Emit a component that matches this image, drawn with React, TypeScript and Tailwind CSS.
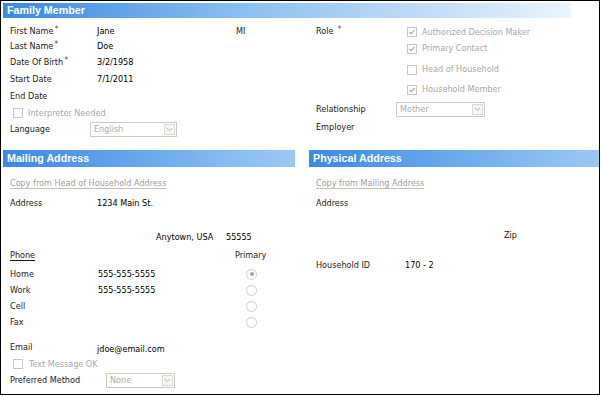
import React from "react";

function Check({ checked }: { checked?: boolean }) {
  return (
    <span className="w-[10px] h-[10px] shrink-0 border border-[#c6c6c6] bg-white flex items-center justify-center">
      {checked && (
        <svg width="8" height="8" viewBox="0 0 8 8">
          <path d="M1.5 4 L3.2 5.7 L6.5 2.2" stroke="#a6a6a6" strokeWidth="1.1" fill="none" />
        </svg>
      )}
    </span>
  );
}

function Radio({ sel }: { sel?: boolean }) {
  return (
    <span className="w-[11px] h-[11px] shrink-0 rounded-full border border-[#d0d0d0] bg-white flex items-center justify-center">
      {sel && <span className="w-[4px] h-[4px] rounded-full bg-[#a5a5a5]" />}
    </span>
  );
}

function Sel({ cls, text }: { cls: string; text: string }) {
  return (
    <div className={`${cls} h-[15px] border border-[#cbcbc3] flex items-stretch bg-white`}>
      <span className="flex-1 pl-[3px] text-[#ababab] leading-[13px]">{text}</span>
      <span className="w-[11px] m-[1px] border border-[#dcdcd4] bg-[#f5f5f2] flex items-center justify-center">
        <svg width="7" height="5" viewBox="0 0 7 5">
          <path d="M1 1 L3.5 3.5 L6 1" stroke="#b3b3b3" strokeWidth="1" fill="none" />
        </svg>
      </span>
    </div>
  );
}

function Star() {
  return <span className="text-[#8e3b3b] ml-[1px] relative -top-[2px]">*</span>;
}

export default function App() {
  return (
    <div className="w-[601px] h-[396px] bg-white">
      <div className="w-[600px] h-[395px] border border-black pt-[2px] pl-[1px] text-[9px] text-[#1a1a1a] font-['DejaVu_Sans_Condensed','Liberation_Sans',sans-serif] leading-none">
        {/* Family Member header */}
        <div className="mx-[1px] h-[15px] bg-[linear-gradient(to_right,#3a89e3_0px,#8ec1f2_250px,#e9f4fd_566px,#fff_570px)] text-white font-bold text-[10.7px] pl-[4px] leading-[15px] font-['Liberation_Sans',sans-serif]">
          Family Member
        </div>

        <div className="flex pl-[1px] gap-[14px] mt-[5px]">
          {/* left */}
          <div className="w-[292px] pl-[7px] flex flex-col">
            <div className="h-[16px] flex items-center">
              <span className="w-[87px]">First Name<Star /></span>
              <span className="w-[139px] text-black">Jane</span>
              <span>MI</span>
            </div>
            <div className="h-[15px] flex items-center">
              <span className="w-[87px]">Last Name<Star /></span>
              <span className="text-black">Doe</span>
            </div>
            <div className="h-[16px] flex items-center">
              <span className="w-[87px]">Date Of Birth<Star /></span>
              <span className="text-black">3/2/1958</span>
            </div>
            <div className="h-[18px] flex items-center">
              <span className="w-[87px]">Start Date</span>
              <span className="text-black">7/1/2011</span>
            </div>
            <div className="h-[16px] flex items-center">
              <span>End Date</span>
            </div>
            <div className="h-[18px] flex items-center pl-[3px]">
              <Check />
              <span className="ml-[5px] text-[#a8a8a8]">Interpreter Needed</span>
            </div>
            <div className="h-[15px] flex items-center">
              <span className="w-[80px]">Language</span>
              <Sel cls="w-[87px]" text="English" />
            </div>
          </div>

          {/* right */}
          <div className="w-[290px] pl-[7px] flex flex-col">
            <div className="flex">
              <div className="w-[91px] h-[16px] flex items-center">
                Role <span className="text-[#8e3b3b] ml-[4px] relative -top-[2px]">*</span>
              </div>
              <div className="flex flex-col mt-[1px] text-[#a8a8a8]">
                <div className="h-[16px] flex items-center">
                  <Check checked />
                  <span className="ml-[5px]">Authorized Decision Maker</span>
                </div>
                <div className="h-[17px] flex items-center">
                  <Check checked />
                  <span className="ml-[5px]">Primary Contact</span>
                </div>
                <div className="h-[25px] flex items-center">
                  <Check />
                  <span className="ml-[5px]">Head of Household</span>
                </div>
                <div className="h-[15px] flex items-center">
                  <Check checked />
                  <span className="ml-[5px]">Household Member</span>
                </div>
              </div>
            </div>
            <div className="mt-[4px] h-[16px] flex items-center">
              <span className="w-[80px]">Relationship</span>
              <Sel cls="w-[89px]" text="Mother" />
            </div>
            <div className="mt-[2px] h-[16px] flex items-center">
              <span>Employer</span>
            </div>
          </div>
        </div>

        {/* Address sections */}
        <div className="flex pl-[1px] gap-[14px] mt-[13px]">
          {/* Mailing */}
          <div className="w-[292px] flex flex-col">
            <div className="h-[17px] bg-[linear-gradient(to_right,#3a89e3_0px,#8ec1f2_250px,#e9f4fd_566px,#fff_570px)] text-white font-bold text-[10.7px] pl-[4px] leading-[17px] font-['Liberation_Sans',sans-serif]">
              Mailing Address
            </div>
            <div className="pl-[7px] flex flex-col">
              <div className="mt-[8px] h-[16px] flex items-center">
                <span className="text-[#9d9d9d] underline decoration-[#cbbfae] underline-offset-[2px]">
                  Copy from Head of Household Address
                </span>
              </div>
              <div className="mt-[4px] h-[16px] flex items-center">
                <span className="w-[87px]">Address</span>
                <span className="text-black">1234 Main St.</span>
              </div>
              <div className="mt-[18px] h-[16px] flex items-center">
                <span className="ml-[146px] w-[70px] text-black">Anytown, USA</span>
                <span className="text-black">55555</span>
              </div>
              <div className="mt-[2px] h-[16px] flex items-center">
                <span className="w-[225px]">
                  <span className="underline underline-offset-[2px]">Phone</span>
                </span>
                <span>Primary</span>
              </div>
              <div className="mt-[3px] flex flex-col">
                {[
                  ["Home", "555-555-5555", true],
                  ["Work", "555-555-5555", false],
                  ["Cell", "", false],
                  ["Fax", "", false],
                ].map(([l, v, s], i) => (
                  <div key={i} className="h-[16px] flex items-center">
                    <span className="w-[88px]">{l as string}</span>
                    <span className="w-[148px] text-black">{v as string}</span>
                    <Radio sel={s as boolean} />
                  </div>
                ))}
              </div>
              <div className="mt-[9px] h-[16px] flex items-center">
                <span className="w-[87px]">Email</span>
                <span className="mt-[4px] text-black">jdoe@email.com</span>
              </div>
              <div className="mt-[1px] h-[16px] flex items-center pl-[3px]">
                <Check />
                <span className="ml-[6px] text-[#a8a8a8]">Text Message OK</span>
              </div>
              <div className="h-[16px] flex items-center">
                <span className="w-[96px]">Preferred Method</span>
                <Sel cls="w-[69px]" text="None" />
              </div>
            </div>
          </div>

          {/* Physical */}
          <div className="w-[290px] flex flex-col">
            <div className="h-[17px] bg-[linear-gradient(to_right,#3a89e3_0px,#8ec1f2_250px,#e9f4fd_566px,#fff_570px)] text-white font-bold text-[10.7px] pl-[4px] leading-[17px] font-['Liberation_Sans',sans-serif]">
              Physical Address
            </div>
            <div className="pl-[7px] flex flex-col">
              <div className="mt-[8px] h-[16px] flex items-center">
                <span className="text-[#9d9d9d] underline decoration-[#cbbfae] underline-offset-[2px]">
                  Copy from Mailing Address
                </span>
              </div>
              <div className="mt-[4px] h-[16px] flex items-center">
                <span>Address</span>
              </div>
              <div className="mt-[16px] h-[16px] flex items-center">
                <span className="ml-[188px]">Zip</span>
              </div>
              <div className="mt-[14px] h-[16px] flex items-center">
                <span className="w-[89px]">Household ID</span>
                <span className="text-black">170 - 2</span>
              </div>
            </div>
          </div>
        </div>
      </div>
    </div>
  );
}
